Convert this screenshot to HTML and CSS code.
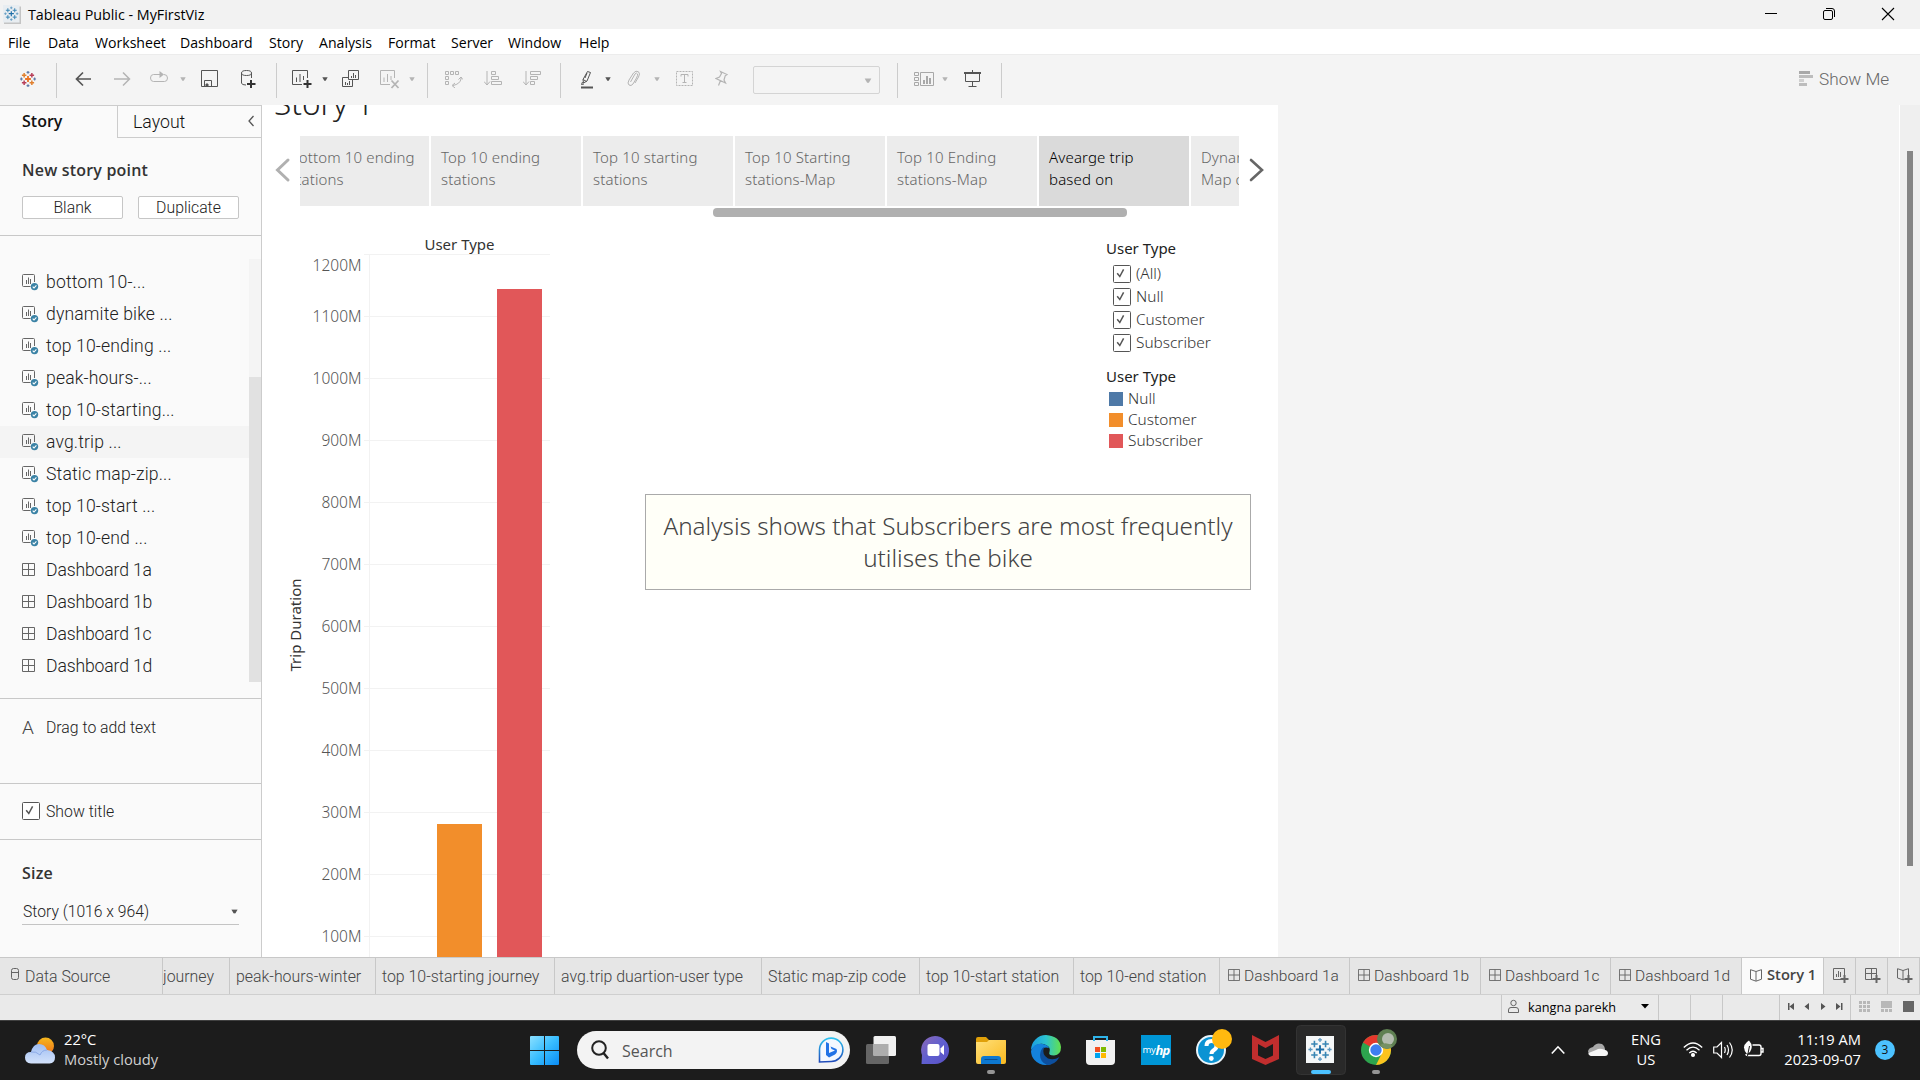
FILE: index.html
```
<!DOCTYPE html>
<html lang="en">
<head>
<meta charset="utf-8">
<title>Tableau Public - MyFirstViz</title>
<link rel="stylesheet" href="styles.css">
</head>
<body>
<svg class="defs" aria-hidden="true">
  <symbol id="sheet" viewBox="0 0 17 17"><path d="M8.500 12.500H1.500Q.5 12.500.5 11.500V1.500Q.5.5 1.500.5H11.500Q12.500.500 12.500 1.500V8" fill="none" stroke="#666"/><path d="M4.500 6V10M6.500 3.500V10M8.500 5V10" stroke="#666"/><circle cx="12.500" cy="12.600" r="3.700" fill="#3a82a5"/><path d="M10.700 12.700L12 14L14.400 11.300" fill="none" stroke="#fff" stroke-width="1.100"/></symbol>
  <symbol id="dash" viewBox="0 0 14 14"><path d="M.5.5H12.500V12.500H.5ZM6.500.5V12.500M.5 6.500H12.500" fill="none" stroke="#666"/></symbol>
  <symbol id="caret" viewBox="0 0 6 4"><path d="M.300.300H5.700L3.700 3.700H2.300Z" fill="currentColor"/></symbol>
  <symbol id="check" viewBox="0 0 18 18"><rect x=".5" y=".5" width="17" height="17" rx="1" fill="#fff" stroke="#555"/><path d="M4.200 8.300L6.800 11.500L10.600 4.300" fill="none" stroke="#555" stroke-width="1.500"/></symbol>
  <symbol id="book" viewBox="0 0 12 13"><path d="M6 2.500L.5.700V10.200L6 12.200L11.500 10.200V.700L6 2.500V12" fill="none" stroke="#666"/></symbol>
  <symbol id="marks" viewBox="0 0 28 28"><path class="m1" d="M14 9.500V18.500M9.500 14H18.500"/><path class="m2" d="M8 4.500V11.500M4.500 8H11.500M20 16.500V23.500M16.500 20H23.500"/><path class="m3" d="M20 4.500V11.500M16.500 8H23.500M8 16.500V23.500M4.500 20H11.500"/><path class="m4" d="M14 1.500V6M11.800 3.700H16.200M14 22V26.500M11.800 24.300H16.200M3.700 11.800V16.200M1.500 14H6M24.300 11.800V16.200M22 14H26.500"/></symbol>
</svg>

<header class="titlebar">
  <svg class="appicon marks-blue" viewBox="0 0 18 19"><rect x="1" y="1.500" width="17" height="17.500" fill="#c4c4c4"/><rect width="16.500" height="17.500" fill="#e8edf1"/><use href="#marks" x=".300" y=".700" width="16" height="16"/></svg>
  <span class="apptitle">Tableau Public - MyFirstViz</span>
  <svg class="winbtns" viewBox="0 0 140 29"><path d="M5 13.500H17" stroke="#000"/><rect x="63.500" y="10.500" width="9" height="9" rx="1.500" fill="none" stroke="#000"/><path d="M66 8.500H72Q74.500 8.500 74.500 11V17" fill="none" stroke="#000"/><path d="M122 8L134 20M134 8L122 20" stroke="#000" stroke-width="1.100"/></svg>
</header>
<nav class="menubar"><span>File</span><span>Data</span><span>Worksheet</span><span>Dashboard</span><span>Story</span><span>Analysis</span><span>Format</span><span>Server</span><span>Window</span><span>Help</span></nav>

<div class="toolbar">
  <svg class="marks-color" width="18" height="18"><use href="#marks" width="18" height="18"/></svg>
  <i class="sep"></i>
  <svg width="17" height="18" fill="none" stroke="#555" stroke-width="1.700"><path d="M16 9H1.500M8 2.500L1.500 9L8 15.500"/></svg>
  <svg width="17" height="18" fill="none" stroke="#b4b4b4" stroke-width="1.500"><path d="M0 9H15M9 2.500L15.500 9L9 15.500"/></svg>
  <svg width="19" height="18" fill="none" stroke="#b4b4b4"><path d="M11 4.500H3.500Q.5 4.500.5 8T3.500 11.500H14.500Q17.500 11.500 17.500 8T14 4.500"/><path d="M9.500 1L14 4.500L9.500 8Z" fill="#b4b4b4" stroke="none"/></svg>
  <svg class="caret dim" width="6" height="4"><use href="#caret"/></svg>
  <svg width="17" height="18" fill="none" stroke="#555"><path d="M.5.5H16.500V16.500H.5ZM3.500 16V10.500H10.500V16"/><path d="M5 14H7V16H5Z" fill="#555"/></svg>
  <svg width="16" height="20" fill="none" stroke="#555"><ellipse cx="5.500" cy="4" rx="5" ry="2.500"/><path d="M.5 4V14Q.5 16 5 16M10.500 4V9"/><path d="M10 11V19M6 15H14.500" stroke="#333" stroke-width="2"/></svg>
  <i class="sep"></i>
  <svg width="20" height="20" fill="none" stroke="#555"><path d="M10 15.500H.5V1.500H15.500V9M4.500 8.500V13M8 5V13M11.500 7V11"/><path d="M15.500 11V19M11.500 15H19.500" stroke="#333" stroke-width="2"/></svg>
  <svg class="caret" width="6" height="4"><use href="#caret"/></svg>
  <svg width="18" height="18" fill="none" stroke="#555"><path d="M6.500.5H16.500V9.500H6.500ZM6 7.500H.5V16.500H10.500V10M3.500 12V15M5.500 13V15M7.500 11V15M9.500 6V8M11.500 3V8M13.500 5V8"/></svg>
  <svg width="20" height="20" fill="none" stroke="#b4b4b4"><path d="M10 15.500H.5V1.500H14.500V9M4 8.500V13M7.500 5V13M11 7V11"/><path d="M11.500 11.500L18.500 19M18.500 11.500L11.500 19" stroke-width="1.800"/></svg>
  <svg class="caret dim" width="6" height="4"><use href="#caret"/></svg>
  <i class="sep"></i>
  <svg width="18" height="18" fill="none" stroke="#b4b4b4"><path d="M.5 1.500H3.500V4.500H.5ZM5.500 1.500H8.500V4.500H5.500ZM10.500 1.500H13.500V4.500H10.500ZM.5 6.500H3.500V9.500H.5ZM.5 11.500H3.500V14.500H.5Z"/><path d="M16 7V9Q15 14 8 15.500M13.500 9.500L16 7L17.800 9.500M10 13L7 15.500L10 18"/></svg>
  <svg width="19" height="18" fill="none" stroke="#b4b4b4"><path d="M3 1V15M0 11.500L3 15L6 11.500M7.500 1.500H11.500V4.500H7.500ZM7.500 6.500H14.500V9.500H7.500ZM7.500 11.500H17.500V14.500H7.500Z"/></svg>
  <svg width="19" height="18" fill="none" stroke="#b4b4b4"><path d="M3 1V15M0 11.500L3 15L6 11.500M7.500 1.500H17.500V4.500H7.500ZM7.500 6.500H14.500V9.500H7.500ZM7.500 11.500H11.500V14.500H7.500Z"/></svg>
  <i class="sep"></i>
  <svg width="14" height="19" fill="none" stroke="#555"><path d="M7.500 1.500L10.500 2.500L7 11L3.500 13L3 9.500ZM3 9.500L6.500 11.500M7 3L5 8M2.500 12L1.500 14.500L4 14"/><path d="M1 17.500H13" stroke-width="2"/></svg>
  <svg class="caret" width="6" height="4"><use href="#caret"/></svg>
  <svg width="14" height="18" fill="none" stroke="#b4b4b4"><path d="M3.500 12L8 4Q9.500 2 10.500 4Q11 5 9.500 8L6 14Q4 16.500 2 15Q0 13.500 2 10L6.500 3Q9 0 11.500 1.800Q13.500 3.500 11.500 7L8 13"/></svg>
  <svg class="caret dim" width="6" height="4"><use href="#caret"/></svg>
  <svg width="17" height="18" fill="none" stroke="#b4b4b4"><rect x=".5" y="1.500" width="16" height="14" stroke-dasharray="2 1"/><path d="M5 6.500V4.500H12V6.500M8.500 4.500V12.500M6.500 12.500H10.500"/></svg>
  <svg width="14" height="18" fill="none" stroke="#b4b4b4"><path d="M5.500 1.500L12 4.500L10.200 5.800L9 10L10.500 13L1 8.500L4.500 7L6.500 3.500ZM5.500 10.500L3.500 15.500" stroke-width="1.200"/></svg>
  <div class="fit"><svg class="caret dim" width="8" height="5" viewBox="0 0 6 4"><use href="#caret"/></svg></div>
  <i class="sep"></i>
  <svg width="20" height="18" fill="none" stroke="#a8a8a8"><path d="M.5 2.500H4.500V5.500H.5ZM.5 7.500H4.500V10.500H.5ZM.5 12.500H4.500V15.500H.5ZM6.500 2.500H19.500V15.500H6.500Z"/><path d="M10 10V14M13 6V14M16 8V14" stroke-width="2"/></svg>
  <svg class="caret dim" width="6" height="4"><use href="#caret"/></svg>
  <svg width="17" height="18" fill="none" stroke="#555"><path d="M0 3H17" stroke-width="2"/><path d="M8.500 0V2M1.500 3V11.500H15.500V3M8.500 12V16M4.500 16.500H12.500"/></svg>
  <i class="sep"></i>
  <div class="showme"><svg width="14" height="16"><path d="M0 0H11V3H0Z" fill="#a9a9a9"/><path d="M0 4H14V7H0ZM0 12H8V15H0Z" fill="#bdbdbd"/><path d="M0 8H5V11H0Z" fill="#d0d0d0"/></svg><span>Show Me</span></div>
</div>

<main class="workspace">
  <aside class="panel">
    <div class="ptabs"><div class="ptab on">Story</div><div class="ptab">Layout<svg width="7" height="12" fill="none" stroke="#555" stroke-width="1.300"><path d="M5.500 1L1 6L5.500 11"/></svg></div></div>
    <section class="newpoint">
      <h2>New story point</h2>
      <div class="btns"><button>Blank</button><button>Duplicate</button></div>
    </section>
    <section class="sheets">
      <ul>
        <li><svg><use href="#sheet"/></svg>bottom 10-...</li>
        <li><svg><use href="#sheet"/></svg>dynamite bike ...</li>
        <li><svg><use href="#sheet"/></svg>top 10-ending ...</li>
        <li><svg><use href="#sheet"/></svg>peak-hours-...</li>
        <li><svg><use href="#sheet"/></svg>top 10-starting...</li>
        <li class="hover"><svg><use href="#sheet"/></svg>avg.trip ...</li>
        <li><svg><use href="#sheet"/></svg>Static map-zip...</li>
        <li><svg><use href="#sheet"/></svg>top 10-start ...</li>
        <li><svg><use href="#sheet"/></svg>top 10-end ...</li>
        <li class="board"><svg viewBox="0 -1 17 17"><use href="#dash" width="14" height="14"/></svg>Dashboard 1a</li>
        <li class="board"><svg viewBox="0 -1 17 17"><use href="#dash" width="14" height="14"/></svg>Dashboard 1b</li>
        <li class="board"><svg viewBox="0 -1 17 17"><use href="#dash" width="14" height="14"/></svg>Dashboard 1c</li>
        <li class="board"><svg viewBox="0 -1 17 17"><use href="#dash" width="14" height="14"/></svg>Dashboard 1d</li>
      </ul>
      <div class="track"><div class="thumb"></div></div>
    </section>
    <section class="drag"><span class="glyph">A</span>Drag to add text</section>
    <section class="showtitle"><svg width="18" height="18"><use href="#check"/></svg>Show title</section>
    <section class="size">
      <h2>Size</h2>
      <div class="select"><span>Story (1016 x 964)</span><svg class="caret" width="7" height="5" viewBox="0 0 6 4"><use href="#caret"/></svg></div>
    </section>
  </aside>

  <div class="story">
    <h1>Story 1</h1>
    <div class="navigator">
      <svg class="arrow" width="25" height="70" fill="none" stroke="#b0b0b0" stroke-width="3" stroke-linecap="round"><path d="M13 24L2.500 34L13 44"/></svg>
      <div class="viewport"><div class="strip">
        <div class="point">Bottom 10 ending<br>stations</div>
        <div class="point">Top 10 ending<br>stations</div>
        <div class="point">Top 10 starting<br>stations</div>
        <div class="point">Top 10 Starting<br>stations-Map</div>
        <div class="point">Top 10 Ending<br>stations-Map</div>
        <div class="point current">Avearge trip<br>based on</div>
        <div class="point">Dynamite<br>Map of</div>
      </div></div>
      <svg class="arrow" width="25" height="70" fill="none" stroke="#666" stroke-width="2.600" stroke-linecap="round"><path d="M12 24L23 34L12 44"/></svg>
    </div>
    <div class="hthumb"></div>
    <div class="body">
      <svg class="chart" width="383" height="740" viewBox="262 217 383 740">
        <path class="grid" d="M364 254.500H550M364 316.500H550M364 378.500H550M364 440.500H550M364 502.500H550M364 564.500H550M364 626.500H550M364 688.500H550M364 750.500H550M364 812.500H550M364 874.500H550M364 936.500H550M369.500 254V957"/>
        <rect x="437" y="824" width="45" height="133" fill="#f28e2b"/>
        <rect x="497" y="289" width="45" height="668" fill="#e15759"/>
        <text class="head" x="459.500" y="250" text-anchor="middle">User Type</text>
        <g class="axis" text-anchor="end">
          <text x="361.500" y="271">1200M</text><text x="361.500" y="322">1100M</text><text x="361.500" y="384">1000M</text><text x="361.500" y="446">900M</text><text x="361.500" y="508">800M</text><text x="361.500" y="570">700M</text><text x="361.500" y="632">600M</text><text x="361.500" y="694">500M</text><text x="361.500" y="756">400M</text><text x="361.500" y="818">300M</text><text x="361.500" y="880">200M</text><text x="361.500" y="942">100M</text>
        </g>
        <text class="head" transform="translate(301 625) rotate(-90)" text-anchor="middle">Trip Duration</text>
      </svg>
      <div class="side">
        <div class="legends">
          <h3>User Type</h3>
          <div class="filter"><svg width="18" height="18"><use href="#check"/></svg>(All)</div>
          <div class="filter"><svg width="18" height="18"><use href="#check"/></svg>Null</div>
          <div class="filter"><svg width="18" height="18"><use href="#check"/></svg>Customer</div>
          <div class="filter"><svg width="18" height="18"><use href="#check"/></svg>Subscriber</div>
          <h3 class="second">User Type</h3>
          <div class="key"><i class="null"></i>Null</div>
          <div class="key"><i class="customer"></i>Customer</div>
          <div class="key"><i class="subscriber"></i>Subscriber</div>
        </div>
        <p class="note">Analysis shows that Subscribers are most frequently<br>utilises the bike</p>
      </div>
    </div>
  </div>
  <div class="blank"></div>
  <div class="vscroll"><div class="vthumb"></div></div>
</main>

<div class="tabs">
  <div class="tab source"><svg width="10" height="14" fill="none" stroke="#666"><rect x=".5" y=".5" width="7" height="11" rx="2"/><path d="M.5 4.500H7.500"/></svg>Data Source</div>
  <div class="tab cut">journey</div>
  <div class="tab">peak-hours-winter</div>
  <div class="tab">top 10-starting journey</div>
  <div class="tab">avg.trip duartion-user type</div>
  <div class="tab">Static map-zip code</div>
  <div class="tab">top 10-start station</div>
  <div class="tab">top 10-end station</div>
  <div class="tab d"><svg width="12" height="12" viewBox="0 0 13 13"><use href="#dash" width="14" height="14"/></svg>Dashboard 1a</div>
  <div class="tab d"><svg width="12" height="12" viewBox="0 0 13 13"><use href="#dash" width="14" height="14"/></svg>Dashboard 1b</div>
  <div class="tab d"><svg width="12" height="12" viewBox="0 0 13 13"><use href="#dash" width="14" height="14"/></svg>Dashboard 1c</div>
  <div class="tab d"><svg width="12" height="12" viewBox="0 0 13 13"><use href="#dash" width="14" height="14"/></svg>Dashboard 1d</div>
  <div class="tab d active"><svg width="12" height="13"><use href="#book"/></svg>Story 1</div>
  <div class="tab new"><svg width="16" height="17" fill="none" stroke="#666"><path d="M8 11.500H.5V.5H11.500V7M3.500 6V9M5.500 3V9M7.500 4V9"/><path d="M11.500 7V15M7.500 11H15.500" stroke-width="2"/></svg></div>
  <div class="tab new"><svg width="16" height="17" fill="none" stroke="#666"><path d="M8 11.500H.5V.5H11.500V7M6.500.5V11.500M.5 5.500H11.500"/><path d="M11.500 7V15M7.500 11H15.500" stroke-width="2"/></svg></div>
  <div class="tab new"><svg width="16" height="17" fill="none" stroke="#666"><path d="M7.500 11.500L6 11.800L.5 10V.7L6 2.500L11.500.7V7M6 2.500V12"/><path d="M11.500 7V15M7.500 11H15.500" stroke-width="2"/></svg></div>
</div>

<footer class="status">
  <div></div>
  <div class="user"><svg width="11" height="15" fill="none" stroke="#666"><circle cx="5.500" cy="4" r="2.700"/><path d="M.5 13.500V11Q.5 8.500 3 8.500H8Q10.500 8.500 10.500 11V13.500Z"/></svg><span>kangna parekh</span><svg width="8" height="5"><path d="M0 0H8L4 4.500Z"/></svg></div>
  <div></div><div></div><div></div>
  <div class="pager"><svg width="70" height="25" fill="#555"><path d="M8 8H9.500V15H8ZM14 8V15L9.500 11.500ZM29 8V15L24.500 11.500ZM41 8V15L45.500 11.500ZM56 8V15L60.500 11.500ZM61 8H62.500V15H61Z"/></svg></div>
  <div class="views"><svg width="68" height="25" fill="#b8b8b8"><path d="M8 6h3v3h-3zM12 6h3v3h-3zM16 6h3v3h-3zM8 10h3v3h-3zM12 10h3v3h-3zM16 10h3v3h-3zM8 14h3v3h-3zM12 14h3v3h-3zM16 14h3v3h-3zM30 6h11v7h-11zM30 14h3v3h-3zM34 14h3v3h-3zM38 14h3v3h-3z"/><path d="M52 6h11v11h-11z" fill="#666"/></svg></div>
</footer>

<div class="taskbar">
  <svg class="defs"><defs>
    <linearGradient id="sun" x1="0" y1="0" x2="0" y2="1"><stop offset="0" stop-color="#f5b81e"/><stop offset="1" stop-color="#f0701a"/></linearGradient>
    <linearGradient id="cloud" x1="0" y1="0" x2="0" y2="1"><stop offset="0" stop-color="#9fbdf2"/><stop offset="1" stop-color="#d3e2fb"/></linearGradient>
    <linearGradient id="win" x1="0" y1="0" x2="1" y2="1"><stop offset="0" stop-color="#8be0ff"/><stop offset=".5" stop-color="#38bdff"/><stop offset="1" stop-color="#0a8cf5"/></linearGradient>
    <linearGradient id="bing" x1="0" y1="0" x2="0" y2="1"><stop offset="0" stop-color="#2dc3f0"/><stop offset="1" stop-color="#1f49b8"/></linearGradient>
    <linearGradient id="chat" x1="0" y1="0" x2="1" y2="1"><stop offset="0" stop-color="#8d69b5"/><stop offset=".5" stop-color="#5f5fd0"/><stop offset="1" stop-color="#5a50c4"/></linearGradient>
    <linearGradient id="folder" x1="0" y1="0" x2="1" y2="1"><stop offset="0" stop-color="#ffe07a"/><stop offset="1" stop-color="#f9b91f"/></linearGradient>
    <linearGradient id="edge" x1="0" y1="0" x2="1" y2="0"><stop offset="0" stop-color="#1b9de2"/><stop offset=".5" stop-color="#2cc3d0"/><stop offset="1" stop-color="#63e04c"/></linearGradient>
  </defs></svg>
  <div class="weather"><svg width="39" height="60"><circle cx="20.500" cy="26" r="8.500" fill="url(#sun)"/><path d="M6 43.500Q0 43 0 37.500T6 32Q8 24 14 24T22 30Q30 31 30 37.500Q30 43 24.500 43.500Z" fill="url(#cloud)"/><path d="M22 30Q17 30 15 35Q11 31 6 32" fill="none" stroke="#8ba9e6"/></svg><p><span>22°C</span><span class="soft">Mostly cloudy</span></p></div>
  <svg width="29" height="60"><path d="M0 17Q0 16 1 16H14V30H0ZM15 16H28Q29 16 29 17V30H15ZM0 31H14V45H1Q0 45 0 44ZM15 31H29V44Q29 45 28 45H15Z" fill="url(#win)"/></svg>
  <div class="search"><svg width="18" height="20" fill="none" stroke="#222" stroke-width="2"><circle cx="8" cy="8" r="6.800"/><path d="M12.500 13L17 18.500" stroke-width="2.400"/></svg><span>Search</span><svg width="26" height="26"><path d="M1.500 25V13A11.700 11.700 0 1 1 13 24.500Z" fill="#f4f8ff" stroke="url(#bing)" stroke-width="1.600"/><path d="M8 5L11 6.500V16L17 13.500L13.500 12L12.500 9.500L18.500 12Q20 15 17 17.500L11 20.500L8 18Z" fill="#2273e6"/></svg></div>
  <svg width="32" height="60"><rect x="0" y="24" width="23" height="20" rx="1.500" fill="#656565"/><rect x="7.500" y="16" width="22.500" height="20" rx="1.500" fill="#f0f0f0"/><rect x="7.500" y="24" width="15" height="12" fill="#adadad"/></svg>
  <svg width="30" height="60"><path d="M.500 44L1 35A14 14 0 1 1 14 44Z" fill="url(#chat)"/><rect x="6.500" y="24" width="12" height="12" rx="2" fill="#fff"/><path d="M19.500 28.500L23 25V35L19.500 32Z" fill="#fff"/></svg>
  <svg width="31" height="60"><path d="M0 19Q0 17 2 17H10L13 20H30V29H0Z" fill="#e0a009"/><path d="M0 22H11L13 20H29Q30 20 30 22V42Q30 44 28 44H2Q0 44 0 42Z" fill="url(#folder)"/><path d="M5 44V39Q5 36 8 36H22Q25 36 25 39V44Z" fill="#0d78d0"/><path d="M8.500 39.500H21.500" stroke="#0a4f91"/><rect x="11" y="50" width="8" height="4" rx="2" fill="#959595"/></svg>
  <svg width="31" height="60"><path d="M0 30A15 15 0 0 1 15 15Q29 16 30 27Q30 35 23 35.500Q17 35.500 18.500 32Q20 27 15 25Q7 21 0 30Z" fill="url(#edge)"/><path d="M0 31Q3 22 12 24Q17 25 18 28Q11 26 10.500 33Q12 42 20 44.200Q10 47 3.500 40Q0 36 0 31Z" fill="#1482dc"/><path d="M13 27Q10.500 35 17 38.500Q23 40.500 28.500 37Q24 45 16 45Q9 42 9 35Q9.500 29 13 27Z" fill="#0d4f9e"/></svg>
  <svg width="30" height="60"><path d="M0 20H29V41Q29 45 25 45H4Q0 45 0 41Z" fill="#f1f1f1"/><path d="M8 21V17H21V21" fill="none" stroke="#2fb4ea" stroke-width="2"/><path d="M9 27H14V32H9Z" fill="#f25022"/><path d="M15 27H20V32H15Z" fill="#7fba00"/><path d="M9 33H14V38H9Z" fill="#00a4ef"/><path d="M15 33H20V38H15Z" fill="#ffb900"/></svg>
  <div class="hp"><span>my</span><b>hp</b></div>
  <svg width="37" height="60"><circle cx="15" cy="30" r="14" fill="#0b93d3" stroke="#eaf5fb" stroke-width="2"/><path d="M10.500 26Q10.500 21 15.500 21T20.500 26Q20.500 28.500 18 30Q15.500 31.500 15.500 34" fill="none" stroke="#fff" stroke-width="4"/><circle cx="15.300" cy="38.500" r="2.400" fill="#fff"/><circle cx="26" cy="19" r="10" fill="#ffb90f"/></svg>
  <svg width="28" height="60"><path d="M0 15L13.500 22L27 15V39L13.500 45L0 39Z" fill="#c12e2e"/><path d="M6 24L13.500 28L21 24V35.500L13.500 39L6 35.500Z" fill="#1c1c1c"/></svg>
  <svg class="marks-blue" width="50" height="60"><rect x=".5" y="5.500" width="49" height="49" rx="4" fill="#292929" stroke="#333"/><rect x="10" y="16" width="28" height="27" fill="#f5f7f8"/><use href="#marks" x="11" y="16.500" width="26" height="26"/><rect x="15" y="50" width="20" height="4" rx="2" fill="#4cc2ff"/></svg>
  <svg width="37" height="60"><circle cx="15" cy="30" r="15" fill="#2da44e"/><path d="M15 30L2 22.500A15 15 0 0 1 28 22.500Z" fill="#e5372c"/><path d="M15 23H28.300A15 15 0 0 1 15 45L21 33Z" fill="#fcc31e"/><circle cx="15" cy="30" r="7.200" fill="#fff"/><circle cx="15" cy="30" r="5.700" fill="#3f7ef0"/><circle cx="26" cy="19" r="10" fill="#5f8052"/><circle cx="27" cy="19" r="6" fill="#b4bcb0"/><path d="M19 25Q25 21 32 26Q26 32 19 25Z" fill="#769164"/><rect x="11" y="50" width="8" height="4" rx="2" fill="#959595"/></svg>
  <svg width="15" height="60" fill="none" stroke="#fff" stroke-width="1.600"><path d="M.800 33.500L7 26.800L13.300 33.500"/></svg>
  <svg width="21" height="60"><path d="M0 32Q0 28 5 27Q8 22 14 24Q17 26 17 30L3 36Z" fill="#a8a8a8"/><path d="M3 36Q0 35 .5 33L8 30Q11 28 14 29Q20 30 20 33Q20 36 17 36Z" fill="#f5f5f5"/></svg>
  <p class="lang"><span>ENG</span><span>US</span></p>
  <svg width="21" height="60" fill="none" stroke="#fff" stroke-width="1.300"><path d="M.800 27.500Q10 18.500 19.200 27.500M3.500 30.300Q10 24 16.500 30.300M6.300 33Q10 29.500 13.700 33"/><circle cx="10" cy="35" r="1.400" fill="#fff"/></svg>
  <svg width="21" height="60" fill="none" stroke="#fff" stroke-width="1.200"><path d="M.7 27H4L8.500 22.500V37.500L4 33H.7ZM11.500 27Q13 30 11.500 33M14 25Q17 30 14 35M16.500 22.500Q22 30 16.500 37.500"/></svg>
  <svg width="21" height="60" fill="none" stroke="#fff" stroke-width="1.400"><path d="M9.500 25H16Q18 25 18 27V33.500Q18 35.500 16 35.500H5Q3 35.500 3 34M18.500 28.500H20V32H18.500"/><path d="M4 34Q-2 27 4 22L6 20.500Q11 26 7 32Z" fill="#fff" stroke="none"/><path d="M4.500 36L6.500 26" stroke="#1c1c1c" stroke-width="1"/></svg>
  <p class="clock"><span>11:19 AM</span><span>2023-09-07</span></p>
  <div class="badge">3</div>
</div>
</body>
</html>
```
FILE: styles.css
```
* { box-sizing: border-box; }
body, h1, h2, h3, p, ul { margin: 0; padding: 0; }
body { width: 1920px; height: 1080px; overflow: hidden; background: #f4f4f4; font-family: "Open Sans", sans-serif; color: #000; }
svg { display: block; flex: none; }
.defs { position: absolute; width: 0; height: 0; }

.m1 { stroke: var(--a); stroke-width: calc(var(--k) * 1.800px); }
.m2 { stroke: var(--b); stroke-width: calc(var(--k) * 1.500px); }
.m3 { stroke: var(--c); stroke-width: calc(var(--k) * 1.500px); }
.m4 { stroke: var(--d); stroke-width: calc(var(--k) * 1.200px); }
.marks-blue { --a: #1f6fa8; --b: #3a86b4; --c: #3a86b4; --d: #5b97bf; --k: 1.150; }
.marks-color { --a: #eb7424; --b: #e0802f; --c: #b8405a; --d: #5f7aa8; --k: 1.550; }

/* Window frame */
.titlebar { display: flex; align-items: center; height: 29px; padding-left: 3px; background: #f2f2f2; }
.appicon { width: 18px; height: 19px; }
.apptitle { flex: 1; margin-left: 7px; font-size: 14.300px; line-height: 29px; }
.winbtns { width: 140px; height: 29px; margin-right: 20px; }

.menubar { display: grid; grid-template-columns: 40px 47px 85px 89px 50px 69px 63px 57px 71px auto; height: 25px; padding-left: 8px; background: #fff; font-size: 14.100px; line-height: 27px; }

/* Toolbar */
.toolbar { display: grid; grid-template-columns: 37px 19px 39px 36px 30px 21px 40px 35px 16px 30px 20px 38px 29px 18px 18px 39px 39px 37px 20px 25px 22px 27px 22px 39px 38px 144px 17px 28px 22px 37px 798px auto; align-items: center; height: 51px; padding: 0 0 2px 19px; border-top: 1px solid #ececec; background: #f4f4f4; }
.sep { width: 1px; height: 35px; margin-top: 2px; background: #ccc; }
.caret { color: #555; }
.caret.dim { color: #b4b4b4; }
.fit { display: flex; align-items: center; justify-content: flex-end; width: 127px; height: 28px; margin-top: 2px; padding-right: 7px; border: 1px solid #d4d4d4; border-radius: 2px; }
.showme { display: flex; align-items: center; gap: 6px; font: 300 17.200px Roboto, sans-serif; color: #666; }

/* Workspace */
.workspace { display: grid; grid-template-columns: 262px 1016px 621px 21px; height: 852px; }
.panel { height: 852px; border-top: 1px solid #ccc; border-right: 1px solid #ccc; background: #fafafa; font-family: Roboto, sans-serif; font-weight: 300; color: #222; overflow: hidden; }
.panel section { border-bottom: 1px solid #c8c8c8; }
.panel h2 { font: 600 16px "Open Sans", sans-serif; letter-spacing: 0.200px; color: #333; }
.ptabs { display: grid; grid-template-columns: 117px 144px; height: 32px; }
.ptab { display: flex; justify-content: space-between; height: 32px; padding: 0 6px 0 15px; border-left: 1px solid #ccc; border-bottom: 1px solid #ccc; font-size: 17.700px; line-height: 33px; color: #111; }
.ptab svg { margin-top: 9px; }
.ptab.on { padding-left: 22px; border: 0; font: 600 16px/30px "Open Sans", sans-serif; }
.newpoint { height: 98px; padding: 20px 22px 0; }
.newpoint h2 { line-height: 24px; }
.btns { display: flex; gap: 15px; margin-top: 14px; }
.btns button { width: 101px; height: 23px; padding: 0; border: 1px solid #c6c6c6; border-radius: 2px; background: #fff; font: 300 15.800px/21px Roboto, sans-serif; color: #222; }
.sheets { display: flex; height: 463px; }
.sheets ul { flex: 1; padding-top: 30px; list-style: none; }
.sheets li { display: flex; align-items: center; gap: 7px; height: 32px; padding-left: 22px; font-size: 17.600px; letter-spacing: 0.150px; white-space: nowrap; }
.sheets li.board { letter-spacing: -0.150px; }
.sheets li svg { width: 17px; height: 17px; }
.sheets li.hover { background: #f4f4f4; }
.track { width: 12px; height: 423px; margin-top: 23px; padding-top: 118px; background: #f4f4f4; }
.thumb { height: 305px; background: #e1e1e1; }
.drag { display: flex; align-items: flex-start; height: 85px; padding: 19px 22px 0; font-size: 15.800px; line-height: 20px; }
.glyph { width: 24px; font-size: 19px; line-height: 19px; color: #444; }
.showtitle { display: flex; align-items: center; gap: 6px; height: 56px; padding: 0 0 1px 22px; font-size: 15.800px; }
.panel .size { padding: 21px 22px 0; border: 0; }
.size h2 { line-height: 24px; }
.select { display: flex; align-items: center; justify-content: space-between; width: 217px; height: 27px; margin-top: 13px; padding: 1px 1px 0; border-bottom: 1px solid #c4c4c4; font-size: 15.700px; }

/* Story canvas */
.story { height: 852px; background: #fff; font-family: "Noto Sans", sans-serif; overflow: hidden; }
.story h1 { height: 44px; margin-top: -13px; padding-left: 12px; font-weight: 300; font-size: 31.500px; line-height: 22px; color: #222; }
.navigator { display: flex; height: 70px; padding-left: 13px; }
.viewport { width: 939px; overflow: hidden; }
.strip { display: flex; gap: 2px; margin-left: -21px; }
.point { flex: none; width: 150px; height: 70px; padding: 10px; background: #ececec; font-weight: 300; font-size: 15px; line-height: 22px; letter-spacing: 0.150px; color: #666; white-space: nowrap; }
.point.current { background: #dadada; color: #000; }
.hthumb { width: 414px; height: 9px; margin: 2px 0 0 451px; border-radius: 4px; background: #b0b0b0; }
.body { display: flex; height: 740px; }
.chart { font-family: "Noto Sans", sans-serif; }
.grid { fill: none; stroke: #f2f2f2; }
.head { font-size: 15px; fill: #333; }
.axis { font-size: 15.500px; font-weight: 300; fill: #555; }
.legends { height: 277px; padding: 20px 0 0 461px; font-weight: 300; font-size: 15.400px; color: #333; }
.legends h3 { font-weight: 400; font-size: 15px; line-height: 22px; color: #222; }
.filter { display: flex; align-items: center; gap: 5px; height: 23px; padding-left: 7px; }
.legends h3 + .filter { margin-top: 3px; }
.legends h3.second { margin: 10px 0 0; line-height: 24px; }
.key { display: flex; align-items: center; gap: 5px; height: 21px; padding-left: 3px; }
.key i { width: 14px; height: 14px; }
.null { background: #4e79a7; }
.customer { background: #f28e2b; }
.subscriber { background: #e15759; }
.note { width: 606px; height: 96px; padding-top: 15px; border: 1px solid #aaa; background: #fffff8; font-weight: 300; font-size: 24.200px; line-height: 32px; text-align: center; white-space: nowrap; color: #444; }
.vscroll { padding: 46px 0 0 7px; border-left: 1px solid #fff; background: #efefef; }
.vthumb { width: 6px; height: 715px; background: #858585; }

/* Sheet tabs */
.tabs { display: grid; grid-template-columns: 163px 67px 146px 179px 207px 158px 154px 146px 130px 131px 130px 131px 82px 32px 32px 32px; height: 38px; border-top: 1px solid #c8c8c8; border-bottom: 1px solid #cfcfcf; background: #e6e6e6; font: 300 15.900px/37px Roboto, sans-serif; color: #444; }
.tab { padding-left: 6px; border-right: 1px solid #c8c8c8; white-space: nowrap; overflow: hidden; }
.tab.source, .tab.d, .tab.new { display: flex; align-items: center; }
.tab.source { gap: 4px; padding-left: 11px; }
.tab.source svg { margin-top: -2px; }
.tab.cut { padding-left: 0; }
.tab.d { gap: 4px; padding-left: 8px; font-size: 15.500px; }
.tab.d svg { margin-top: -2px; }
.tab.active { gap: 5px; background: #fafafa; font: 600 14.700px/33px "Open Sans", sans-serif; align-items: flex-start; }
.tab.active svg { margin-top: 11px; }
.tab.new { padding-left: 9px; }

.status { display: grid; grid-template-columns: 1502px 157px 32px 32px 57px 71px auto; height: 25px; background: #eaeaea; }
.status > div { border-right: 1px solid #c8c8c8; }
.status > div:last-child { border: 0; }
.user { display: flex; align-items: center; padding: 0 0 2px 6px; font-size: 12.700px; }
.user span { width: 113px; margin-left: 9px; }

/* Taskbar */
.taskbar { display: grid; grid-template-columns: 505px 47px 289px 55px 55px 55px 55px 55px 55px 56px 44px 65px 190px 37px 34px 61px 30px 30px 30px 102px 20px; grid-template-rows: 60px; height: 60px; padding-left: 25px; background: #1c1c1c; box-shadow: inset 0 1px #404040; color: #fff; font-size: 14.700px; line-height: 20px; }
.taskbar p span { display: block; }
.weather { display: flex; }
.weather p, .lang, .clock { padding-top: 9px; }
.soft { color: #d0d0d0; }
.search { display: flex; align-items: center; width: 273px; height: 38px; margin-top: 11px; padding: 0 6px 0 14px; border-radius: 19px; background: #f3f3f3; color: #555; font-size: 16px; }
.search span { flex: 1; margin: 2px 0 0 13px; }
.hp { display: flex; align-items: center; justify-content: center; width: 30px; height: 30px; margin-top: 15px; background: #0096d6; font-size: 9.500px; letter-spacing: -0.300px; }
.hp b { font-size: 13px; font-style: italic; letter-spacing: -0.800px; }
.lang { width: 48px; text-align: center; }
.clock { width: 88px; text-align: right; }
.badge { width: 20px; height: 20px; margin-top: 20px; border-radius: 50%; background: #4cc2ff; color: #111; font-size: 12px; line-height: 20px; text-align: center; }
```
